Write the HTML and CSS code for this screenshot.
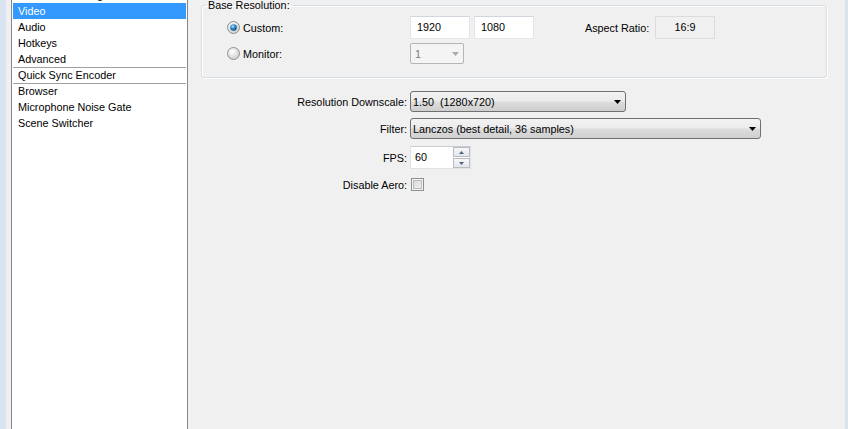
FILE: index.html
```html
<!DOCTYPE html>
<html lang="en">
<head>
<meta charset="utf-8">
<title>Settings - Video</title>
<link rel="stylesheet" href="styles.css">
</head>
<body>
<div class="window">
  <div class="edge edge-left"></div>
  <nav class="sidebar">
    <ul class="nav-list">
      <li class="nav-item">Broadcast Settings</li>
      <li class="nav-item selected">Video</li>
      <li class="nav-item">Audio</li>
      <li class="nav-item">Hotkeys</li>
      <li class="nav-item">Advanced</li>
      <li class="nav-item sep">Quick Sync Encoder</li>
      <li class="nav-item sep">Browser</li>
      <li class="nav-item">Microphone Noise Gate</li>
      <li class="nav-item">Scene Switcher</li>
    </ul>
  </nav>
  <main class="content">
    <fieldset class="group">
      <legend class="group-title">Base Resolution:</legend>
      <div class="group-row row-custom">
        <label class="radio-label">
          <svg class="radio" width="13" height="13" viewBox="0 0 13 13">
            <defs>
              <radialGradient id="rb1" cx="0.4" cy="0.35" r="0.75"><stop offset="0" stop-color="#ffffff"/><stop offset="1" stop-color="#c8c8c8"/></radialGradient>
              <radialGradient id="dot1" cx="0.4" cy="0.35" r="0.7"><stop offset="0" stop-color="#b7e6fb"/><stop offset="0.45" stop-color="#2c8fd6"/><stop offset="1" stop-color="#0b3a63"/></radialGradient>
            </defs>
            <circle cx="6.5" cy="6.5" r="6" fill="url(#rb1)" stroke="#8f8f8f"/>
            <circle cx="6.5" cy="6.5" r="3.3" fill="url(#dot1)"/>
          </svg>
          <span>Custom:</span>
        </label>
        <div class="textbox">1920</div>
        <div class="textbox gap4">1080</div>
        <span class="aspect-label">Aspect Ratio:</span>
        <div class="readout">16:9</div>
      </div>
      <div class="group-row row-monitor">
        <label class="radio-label">
          <svg class="radio" width="13" height="13" viewBox="0 0 13 13">
            <defs>
              <radialGradient id="rb2" cx="0.4" cy="0.35" r="0.75"><stop offset="0" stop-color="#ffffff"/><stop offset="1" stop-color="#c8c8c8"/></radialGradient>
            </defs>
            <circle cx="6.5" cy="6.5" r="6" fill="url(#rb2)" stroke="#8f8f8f"/>
          </svg>
          <span>Monitor:</span>
        </label>
        <div class="combo combo-disabled combo-monitor">
          <span class="combo-text">1</span>
          <svg class="combo-arrow" width="7" height="4" viewBox="0 0 7 4"><polygon points="0,0 7,0 3.5,4" fill="#a9a9a9"/></svg>
        </div>
      </div>
    </fieldset>

    <div class="form">
      <div class="form-row row-downscale">
        <span class="form-label">Resolution Downscale:</span>
        <div class="combo combo-downscale">
          <span class="combo-text">1.50  (1280x720)</span>
          <svg class="combo-arrow" width="7" height="4" viewBox="0 0 7 4"><polygon points="0,0 7,0 3.5,4" fill="#000"/></svg>
        </div>
      </div>
      <div class="form-row row-filter">
        <span class="form-label">Filter:</span>
        <div class="combo combo-filter">
          <span class="combo-text">Lanczos (best detail, 36 samples)</span>
          <svg class="combo-arrow" width="7" height="4" viewBox="0 0 7 4"><polygon points="0,0 7,0 3.5,4" fill="#000"/></svg>
        </div>
      </div>
      <div class="form-row row-fps">
        <span class="form-label">FPS:</span>
        <div class="spinbox">
          <span class="spin-text">60</span>
          <div class="spin-buttons">
            <div class="spin-btn"><svg width="5" height="3" viewBox="0 0 5 3"><polygon points="2.5,0 5,3 0,3" fill="#4f6488"/></svg></div>
            <div class="spin-btn"><svg width="5" height="3" viewBox="0 0 5 3"><polygon points="0,0 5,0 2.5,3" fill="#4f6488"/></svg></div>
          </div>
        </div>
      </div>
      <div class="form-row row-aero">
        <span class="form-label">Disable Aero:</span>
        <span class="checkbox"></span>
      </div>
    </div>
  </main>
  <div class="edge edge-right"></div>
</div>
</body>
</html>
```

FILE: styles.css
```css
html, body {
  margin: 0;
  padding: 0;
}

body {
  background: #f0f0f0;
  font-family: "Liberation Sans", Arial, sans-serif;
  font-size: 10.8px;
  color: #000;
  overflow: hidden;
}

.window {
  display: flex;
  width: 848px;
  height: 429px;
  overflow: hidden;
}

.edge {
  flex: none;
  background: #dae4f1;
}

.edge-left {
  width: 6px;
}

.edge-right {
  width: 3px;
}

/* ---------- sidebar list ---------- */
.sidebar {
  flex: none;
  width: 177px;
  margin-left: 5px;
  box-sizing: border-box;
  border-left: 1px solid #828790;
  border-right: 1px solid #828790;
  background: #fff;
  overflow: hidden;
}

.nav-list {
  list-style: none;
  margin: -13px 0 0;
  padding: 0 1px;
}

.nav-item {
  height: 16px;
  line-height: 16px;
  padding-left: 5px;
  white-space: nowrap;
  box-sizing: border-box;
}

.nav-item.sep {
  border-top: 1px solid #a0a0a0;
  line-height: 15px;
}

.nav-item.selected {
  background: #3399ff;
  color: #fff;
}

/* ---------- content ---------- */
.content {
  flex: 1;
  min-width: 0;
}

.group {
  margin: 0 0 0 13px;
  padding: 0;
  width: 626px;
  height: 78px;
  box-sizing: border-box;
  border: 1px solid #d5dfe5;
  border-radius: 3px;
  box-shadow: inset 1px 1px 0 #ffffff, 1px 1px 0 #ffffff;
  min-width: 0;
}

.group-title {
  margin-left: 4px;
  padding: 0 2px;
  line-height: 11px;
}

.group-row {
  display: flex;
  align-items: center;
  padding-left: 25px;
}

.row-custom {
  margin-top: 5px;
  height: 23px;
}

.row-monitor {
  margin-top: 4px;
  height: 21px;
}

.radio-label {
  display: flex;
  align-items: center;
  gap: 3px;
  width: 183px;
  flex: none;
}

.radio {
  display: block;
  flex: none;
}

.textbox {
  width: 60px;
  height: 23px;
  box-sizing: border-box;
  background: #fff;
  border: 1px solid #e3e7ec;
  border-top-color: #d2d6dc;
  padding-left: 6px;
  line-height: 21px;
  flex: none;
}

.gap4 {
  margin-left: 4px;
}

.aspect-label {
  margin-left: 51px;
  width: 70px;
  flex: none;
}

.readout {
  width: 60px;
  height: 23px;
  box-sizing: border-box;
  border: 1px solid #dcdcdc;
  background: #f0f0f0;
  line-height: 21px;
  text-align: center;
  flex: none;
}

/* ---------- combos ---------- */
.combo {
  display: flex;
  align-items: center;
  height: 21px;
  box-sizing: border-box;
  border: 1px solid #707070;
  border-radius: 3px;
  background: linear-gradient(#f3f3f3 0%, #ebebeb 48%, #dddddd 52%, #cfcfcf 100%);
  padding: 0 4px 0 2px;
  flex: none;
}

.combo-text {
  white-space: pre;
  flex: 1;
}

.combo-arrow {
  display: block;
  flex: none;
}

.combo-disabled {
  border-color: #b3b6b9;
  border-radius: 2px;
  background: #f4f4f4;
  color: #7a7a7a;
  padding-left: 4px;
}

.combo-monitor {
  width: 54px;
}

.combo-downscale {
  width: 216px;
}

.combo-filter {
  width: 351px;
}

/* ---------- form rows ---------- */
.form {
  margin-top: 13px;
}

.form-row {
  display: grid;
  grid-template-columns: 219px auto;
  column-gap: 3px;
  align-items: center;
  justify-items: start;
}

.form-label {
  justify-self: end;
  white-space: nowrap;
}

.row-filter {
  margin-top: 6px;
}

.row-fps {
  margin-top: 7px;
}

.row-aero {
  margin-top: 9px;
}

.spinbox {
  display: flex;
  width: 61px;
  height: 23px;
  box-sizing: border-box;
  background: #fff;
  border: 1px solid #dfe3e8;
  border-top-color: #c9ced4;
}

.spin-text {
  flex: 1;
  padding-left: 4px;
  line-height: 21px;
}

.spin-buttons {
  display: flex;
  flex-direction: column;
  justify-content: space-between;
  width: 17px;
  flex: none;
}

.spin-btn {
  height: 10px;
  box-sizing: border-box;
  border: 1px solid #b7bcc4;
  background: linear-gradient(#f7f7f7, #e4e6ea);
  display: flex;
  align-items: center;
  justify-content: center;
}

.spin-btn svg {
  display: block;
}

.checkbox {
  display: block;
  width: 13px;
  height: 13px;
  margin-left: 1px;
  box-sizing: border-box;
  border: 1px solid #8e8f8f;
  background: linear-gradient(135deg, #d3d3d3, #f6f6f6);
  box-shadow: inset 0 0 0 1px #f4f4f4, inset 0 0 0 2px #b9bcc0;
}
```
